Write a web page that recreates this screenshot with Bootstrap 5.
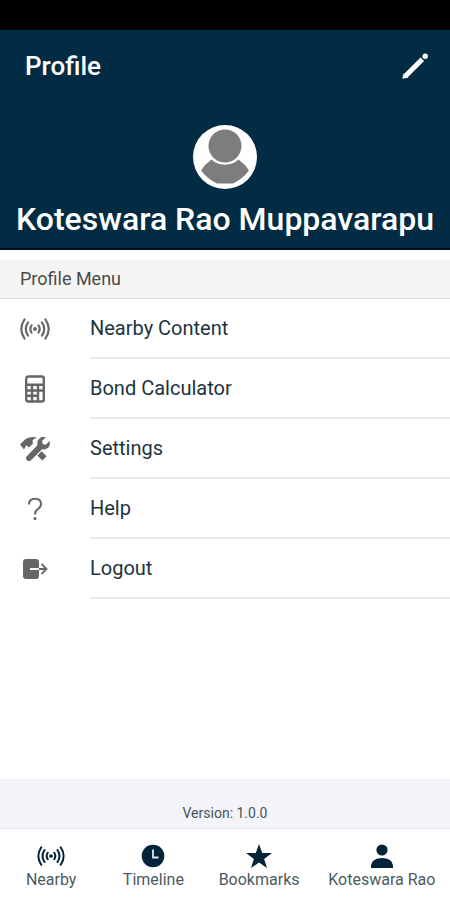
<!DOCTYPE html>
<html lang="en">
<head>
<meta charset="utf-8">
<meta name="viewport" content="width=device-width, initial-scale=1">
<title>Profile</title>
<link rel="stylesheet" href="https://cdn.jsdelivr.net/npm/bootstrap@5.3.0/dist/css/bootstrap.min.css">
<style>
body { font-family: Roboto, "Liberation Sans", sans-serif; color: #1d3440; background: #fff; }
svg { display: block; }
.status-strip { height: 30px; background: #000; }
.app-head { background: #022c43; color: #fff; }
.title-bar { height: 72px; padding: 0 20px 0 25px; border-bottom: 1px solid #01273d; }
.title-bar h1 { font-size: 26px; line-height: 32px; font-weight: 500; }
.hero { padding: 23px 0 9px; border-bottom: 2px solid #020d15; }
.hero h2 { font-size: 32px; line-height: 40px; font-weight: 500; margin-top: 10px; }
.menu-title { margin-top: 10px; padding: 0 20px; height: 39px; font-size: 18px; font-weight: 400; color: #4a4a4a; background: #f5f5f5; border-bottom: 1px solid #d9d9d9; }
.menu-row { height: 60px; color: #1d3440; font-size: 20px; }
.menu-icon { width: 30px; margin: 0 40px 0 20px; color: #666; }
.menu-label { border-bottom: 2px solid #ebebeb; }
.version { height: 50px; padding-bottom: 4px; font-size: 14px; color: #46545c; background: #f2f4f8; border-bottom: 1px solid #e6eaee; }
.tabs { display: grid; grid-template-columns: 15fr 15fr 16fr 20fr; height: 71px; padding-top: 15px; }
.tabs a { color: #4c5a62; font-size: 16px; line-height: 20px; }
.tabs svg { color: #032338; margin-bottom: 2px; }
</style>
<script src="https://cdn.jsdelivr.net/npm/bootstrap@5.3.0/dist/js/bootstrap.bundle.min.js" defer></script>
</head>
<body class="d-flex flex-column min-vh-100">
<svg width="0" height="0" class="position-absolute" aria-hidden="true">
  <symbol id="signal" viewBox="0 0 30 24">
    <circle cx="15" cy="12" r="2" fill="currentColor"/>
    <g fill="none" stroke="currentColor" stroke-width="2.200" stroke-linecap="round">
      <path d="M11.5 8.5q-2.4 3.5 0 7M8 5.5q-4.400 6.500 0 13M4.500 2.500q-6.500 9.500 0 19M18.500 8.500q2.400 3.500 0 7M22 5.500q4.400 6.500 0 13M25.500 2.500q6.500 9.500 0 19"/>
    </g>
  </symbol>
</svg>
<div class="status-strip"></div>
<header class="app-head">
  <div class="title-bar d-flex align-items-center justify-content-between">
    <h1 class="m-0">Profile</h1>
    <button type="button" class="btn p-0 border-0 text-white" aria-label="Edit profile">
      <svg width="30" height="30" viewBox="0 0 30 30"><path d="M6 24.500 22.300 8.200" stroke="currentColor" stroke-width="5"/><path d="M2.800 27.200 4.200 22.700 7.800 26.300z" fill="currentColor" stroke="currentColor" stroke-linejoin="round"/><circle cx="25.200" cy="5.200" r="2.700" fill="currentColor"/></svg>
    </button>
  </div>
  <div class="hero text-center">
    <svg class="mx-auto" width="64" height="64" viewBox="0 0 64 64" role="img" aria-label="Profile photo"><circle cx="32" cy="32" r="32" fill="#fff"/><circle cx="32" cy="21" r="16.500" fill="#7d7d7d"/><path d="M18.500 34.500Q12 39 8 45.500q7 9 16 13h16q9-4 16-13-4-6.500-10.500-11-5.500 5.200-13.500 5.200t-13.500-5.200z" fill="#7d7d7d"/></svg>
    <h2 class="mb-0 text-nowrap">Koteswara Rao Muppavarapu</h2>
  </div>
</header>
<main class="flex-grow-1">
  <h3 class="menu-title mb-0 d-flex align-items-center">Profile Menu</h3>
  <nav aria-label="Profile menu">
    <a href="#nearby" class="menu-row d-flex text-decoration-none">
      <span class="menu-icon d-flex align-items-center justify-content-center"><svg width="30" height="24"><use href="#signal"/></svg></span>
      <span class="menu-label flex-grow-1 d-flex align-items-center">Nearby Content</span>
    </a>
    <a href="#calculator" class="menu-row d-flex text-decoration-none">
      <span class="menu-icon d-flex align-items-center justify-content-center"><svg width="20" height="28" viewBox="0 0 20 28"><rect x="1.200" y="1.500" width="17.600" height="25" rx="2" fill="none" stroke="currentColor" stroke-width="2.400"/><path d="M1.500 9.800h17M1.500 15.500h12M1.500 20.800h12M7 10v16M13 10v16M13 15.500h6" stroke="currentColor" stroke-width="2.400"/></svg></span>
      <span class="menu-label flex-grow-1 d-flex align-items-center">Bond Calculator</span>
    </a>
    <a href="#settings" class="menu-row d-flex text-decoration-none">
      <span class="menu-icon d-flex align-items-center justify-content-center"><svg width="30" height="26" viewBox="0 0 30 26" fill="currentColor"><path d="M0 8.500 5 3.500Q9 .300 15 1.200L17 2q-4 .5-4.500 3l.5 2.500-4 4-2.500-2-1 .4-.5 2.300L3.500 13z"/><path d="m19.500 17.300 5 5" stroke="currentColor" stroke-width="6"/><path d="M25.800 1.200 22 5l.7 3 3 .7L29.500 5q1.200 4-1.300 6.700-2.700 2.500-6.200 1.500L11 24.200q-2 1.700-4 0t-.2-4L17.500 9.300q-1-3.800 1.400-6.400 2.800-2.900 6.900-1.700z"/></svg></span>
      <span class="menu-label flex-grow-1 d-flex align-items-center">Settings</span>
    </a>
    <a href="#help" class="menu-row d-flex text-decoration-none">
      <span class="menu-icon d-flex align-items-center justify-content-center"><svg width="16" height="24" viewBox="0 0 16 24"><path d="M2 7.500q0-5.700 6-5.700t6 5.200q0 3-3.200 5.200Q8 14 8 17.500" fill="none" stroke="currentColor" stroke-width="2"/><circle cx="8" cy="21.500" r="1.600" fill="currentColor"/></svg></span>
      <span class="menu-label flex-grow-1 d-flex align-items-center">Help</span>
    </a>
    <a href="#logout" class="menu-row d-flex text-decoration-none">
      <span class="menu-icon d-flex align-items-center justify-content-center"><svg width="26" height="22" viewBox="0 0 26 22"><rect x="1" y="1" width="16" height="20" rx="3" fill="currentColor"/><path d="M8 11h9" stroke="#fff" stroke-width="2"/><path d="M17 11h7.500M19.500 6l5 5-5 5" fill="none" stroke="currentColor" stroke-width="1.800"/></svg></span>
      <span class="menu-label flex-grow-1 d-flex align-items-center">Logout</span>
    </a>
  </nav>
</main>
<footer>
  <div class="version d-flex align-items-end justify-content-center">Version: 1.0.0</div>
  <nav class="tabs" aria-label="Main">
    <a href="#nearby" class="d-flex flex-column align-items-center text-decoration-none text-nowrap"><svg width="30" height="24" viewBox="-1 -1 32 26"><use href="#signal" width="30" height="24"/></svg>Nearby</a>
    <a href="#timeline" class="d-flex flex-column align-items-center text-decoration-none text-nowrap"><svg width="24" height="24" viewBox="0 0 24 24"><circle cx="12" cy="12" r="11.300" fill="currentColor"/><path d="M12 5.500v8h5.500" fill="none" stroke="#e4e9ee" stroke-width="1.800"/></svg>Timeline</a>
    <a href="#bookmarks" class="d-flex flex-column align-items-center text-decoration-none text-nowrap"><svg width="26" height="24" viewBox="0 0 26 24"><path d="m13 0 3.200 9H26l-7.900 5.900L21 24l-8-5.500L5 24l2.900-9.100L0 9h9.800z" fill="currentColor"/></svg>Bookmarks</a>
    <a href="#profile" class="d-flex flex-column align-items-center text-decoration-none text-nowrap"><svg width="24" height="24" viewBox="0 0 24 24" fill="currentColor"><circle cx="12" cy="6" r="5.600"/><path d="M1 24v-2.500Q2 14 12 14t11 7.500V24z"/></svg>Koteswara Rao</a>
  </nav>
</footer>
</body>
</html>
